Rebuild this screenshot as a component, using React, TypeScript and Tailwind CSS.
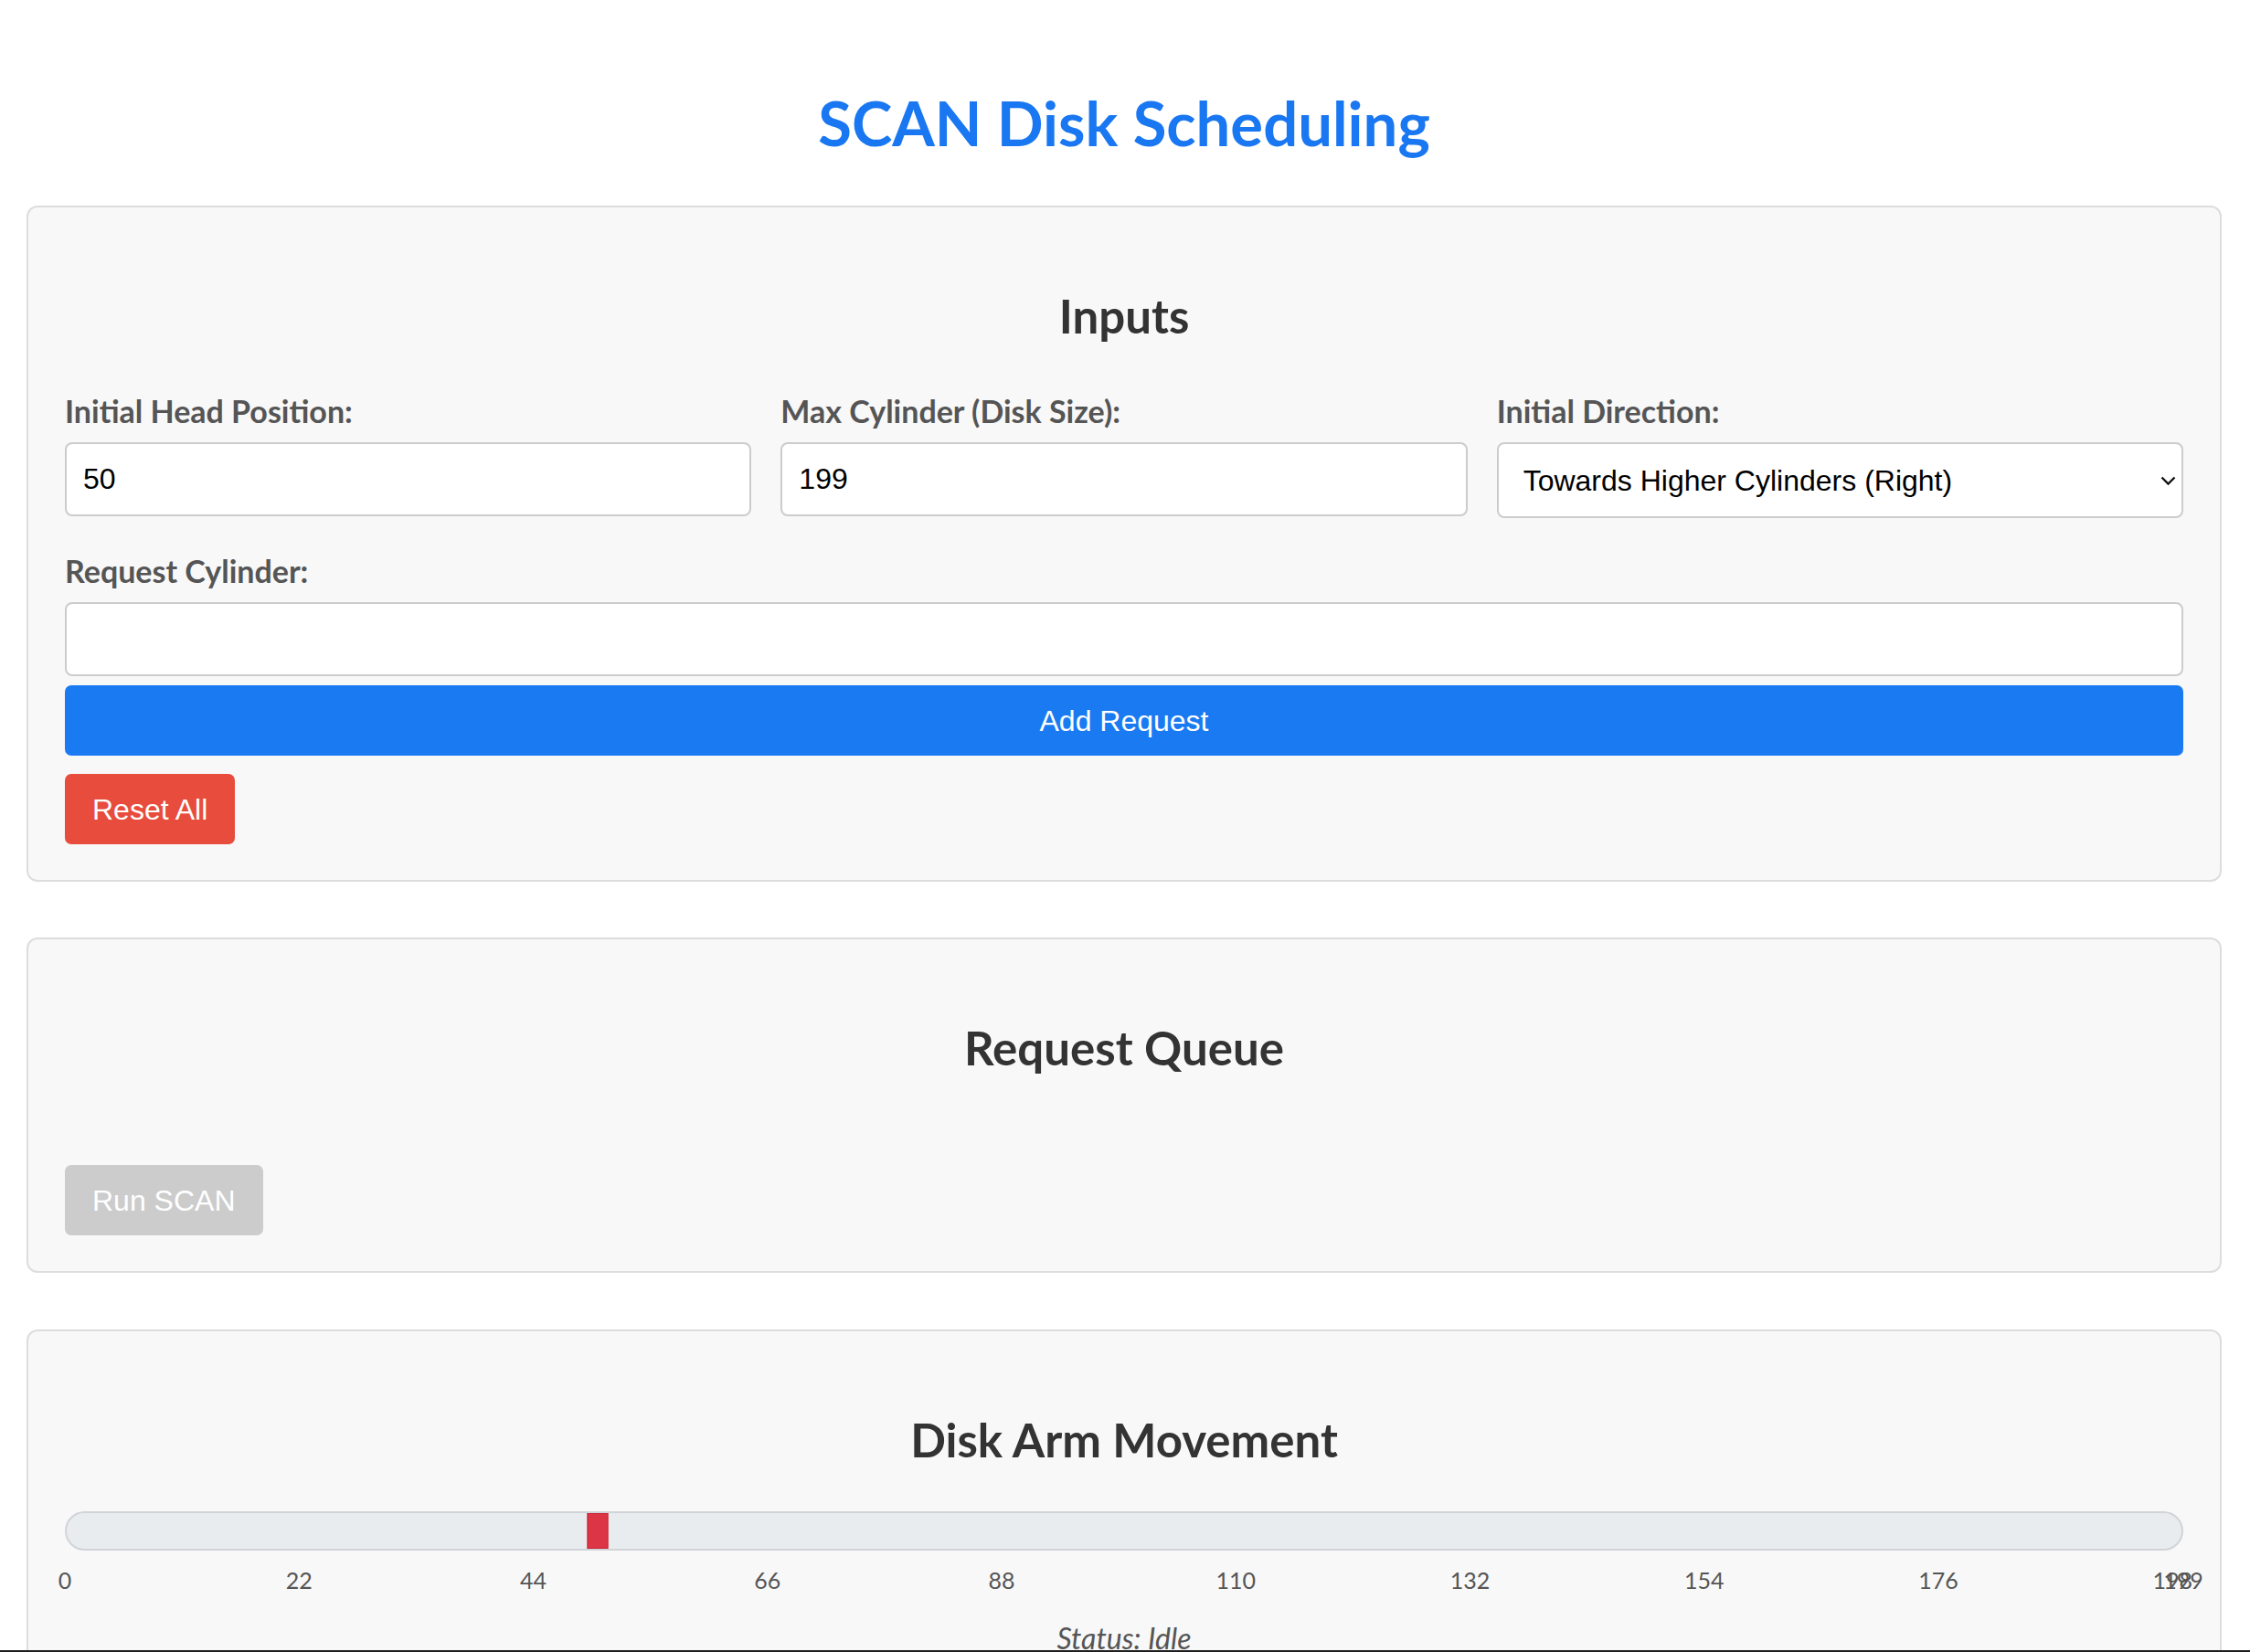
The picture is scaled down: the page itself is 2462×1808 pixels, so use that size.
import React from "react";

const ticks = [0, 22, 44, 66, 88, 110, 132, 154, 176, 198, 199];
const MAX = 199;
const HEAD = 50;

function Label({ children }: { children: React.ReactNode }) {
  return (
    <label className="block text-[34px] leading-[41px] font-bold text-[#555] mb-[14px] font-['Lato',sans-serif]">
      {children}
    </label>
  );
}

function Card({ children, className = "" }: { children: React.ReactNode; className?: string }) {
  return (
    <section
      className={
        "border-2 border-[#dddddd] rounded-[12px] bg-[#f8f8f8] px-[40px] pt-[40px] pb-[39px] " + className
      }
    >
      {children}
    </section>
  );
}

function Heading({ children }: { children: React.ReactNode }) {
  return (
    <h2 className="text-center text-[51px] leading-[61px] font-bold text-[#333] my-[48px] font-['Lato',sans-serif]">
      {children}
    </h2>
  );
}

export default function App() {
  const inputCls =
    "block w-full h-[81px] border-2 border-[#cccccc] rounded-[8px] bg-white px-[18px] text-[32px] text-black font-['Liberation_Sans',Arial,sans-serif] outline-none";
  return (
    <div className="min-h-screen bg-white pl-[29px] pr-[31px] pt-[94px] pb-[60px] font-['Lato',sans-serif]">
      <h1 className="text-center text-[67px] leading-[80px] font-bold text-[#1a77f2] mb-[51px]">
        SCAN Disk Scheduling
      </h1>

      <Card className="mb-[61px]">
        <Heading>Inputs</Heading>
        <div className="grid grid-cols-3 gap-x-[32px] pt-[5px]">
          <div>
            <Label>Initial Head Position:</Label>
            <input className={inputCls} defaultValue="50" />
          </div>
          <div>
            <Label>Max Cylinder (Disk Size):</Label>
            <input className={inputCls} defaultValue="199" />
          </div>
          <div>
            <Label>Initial Direction:</Label>
            <div className="relative">
              <select className="block w-full h-[83px] appearance-none border-2 border-[#cccccc] rounded-[8px] bg-white pl-[27px] pr-[40px] text-[32px] text-black font-['Liberation_Sans',Arial,sans-serif] outline-none">
                <option>Towards Higher Cylinders (Right)</option>
                <option>Towards Lower Cylinders (Left)</option>
              </select>
              <svg
                className="absolute right-[8px] top-1/2 -translate-y-1/2 pointer-events-none"
                width="17"
                height="10"
                viewBox="0 0 17 10"
              >
                <path d="M1.5 1.5 L8.5 8.5 L15.5 1.5" fill="none" stroke="#111" strokeWidth="2.4" />
              </svg>
            </div>
          </div>
        </div>
        <div className="mt-[37px]">
          <Label>Request Cylinder:</Label>
          <input className={inputCls} />
        </div>
        <button className="mt-[10px] block w-full h-[77px] rounded-[7px] bg-[#1a7af2] text-white text-[32px] font-['Liberation_Sans',Arial,sans-serif]">
          Add Request
        </button>
        <button className="mt-[20px] block h-[77px] px-[30px] rounded-[7px] bg-[#e74c3c] text-white text-[32px] font-['Liberation_Sans',Arial,sans-serif]">
          Reset All
        </button>
      </Card>

      <Card className="mb-[62px]">
        <Heading>Request Queue</Heading>
        <ul className="h-[50px]"></ul>
        <button
          disabled
          className="block h-[77px] px-[30px] rounded-[7px] bg-[#cccccc] text-white text-[32px] font-['Liberation_Sans',Arial,sans-serif]"
        >
          Run SCAN
        </button>
      </Card>

      <Card>
        <Heading>Disk Arm Movement</Heading>
        <div className="relative h-[43px] rounded-full border-2 border-[#d0d4d9] bg-[#e9ecef]">
          <div
            className="absolute top-0 h-full w-[23px] -translate-x-1/2 bg-[#dc3545] border border-[#c82333]"
            style={{ left: `${(HEAD / MAX) * 100}%` }}
          />
        </div>
        <div className="relative h-[30px] mt-[17px]">
          {ticks.map((t) => (
            <span
              key={t}
              className="absolute top-0 -translate-x-1/2 text-[25px] leading-[30px] text-[#555]"
              style={{ left: `${(t / MAX) * 100}%` }}
            >
              {t}
            </span>
          ))}
        </div>
        <p className="mt-[30px] text-center italic text-[32px] leading-[38px] text-[#555]">Status: Idle</p>
        <div className="h-[120px]"></div>
      </Card>
      <div className="fixed left-0 right-0 bottom-0 h-[2px] bg-[#1e1e1e]" />
    </div>
  );
}
